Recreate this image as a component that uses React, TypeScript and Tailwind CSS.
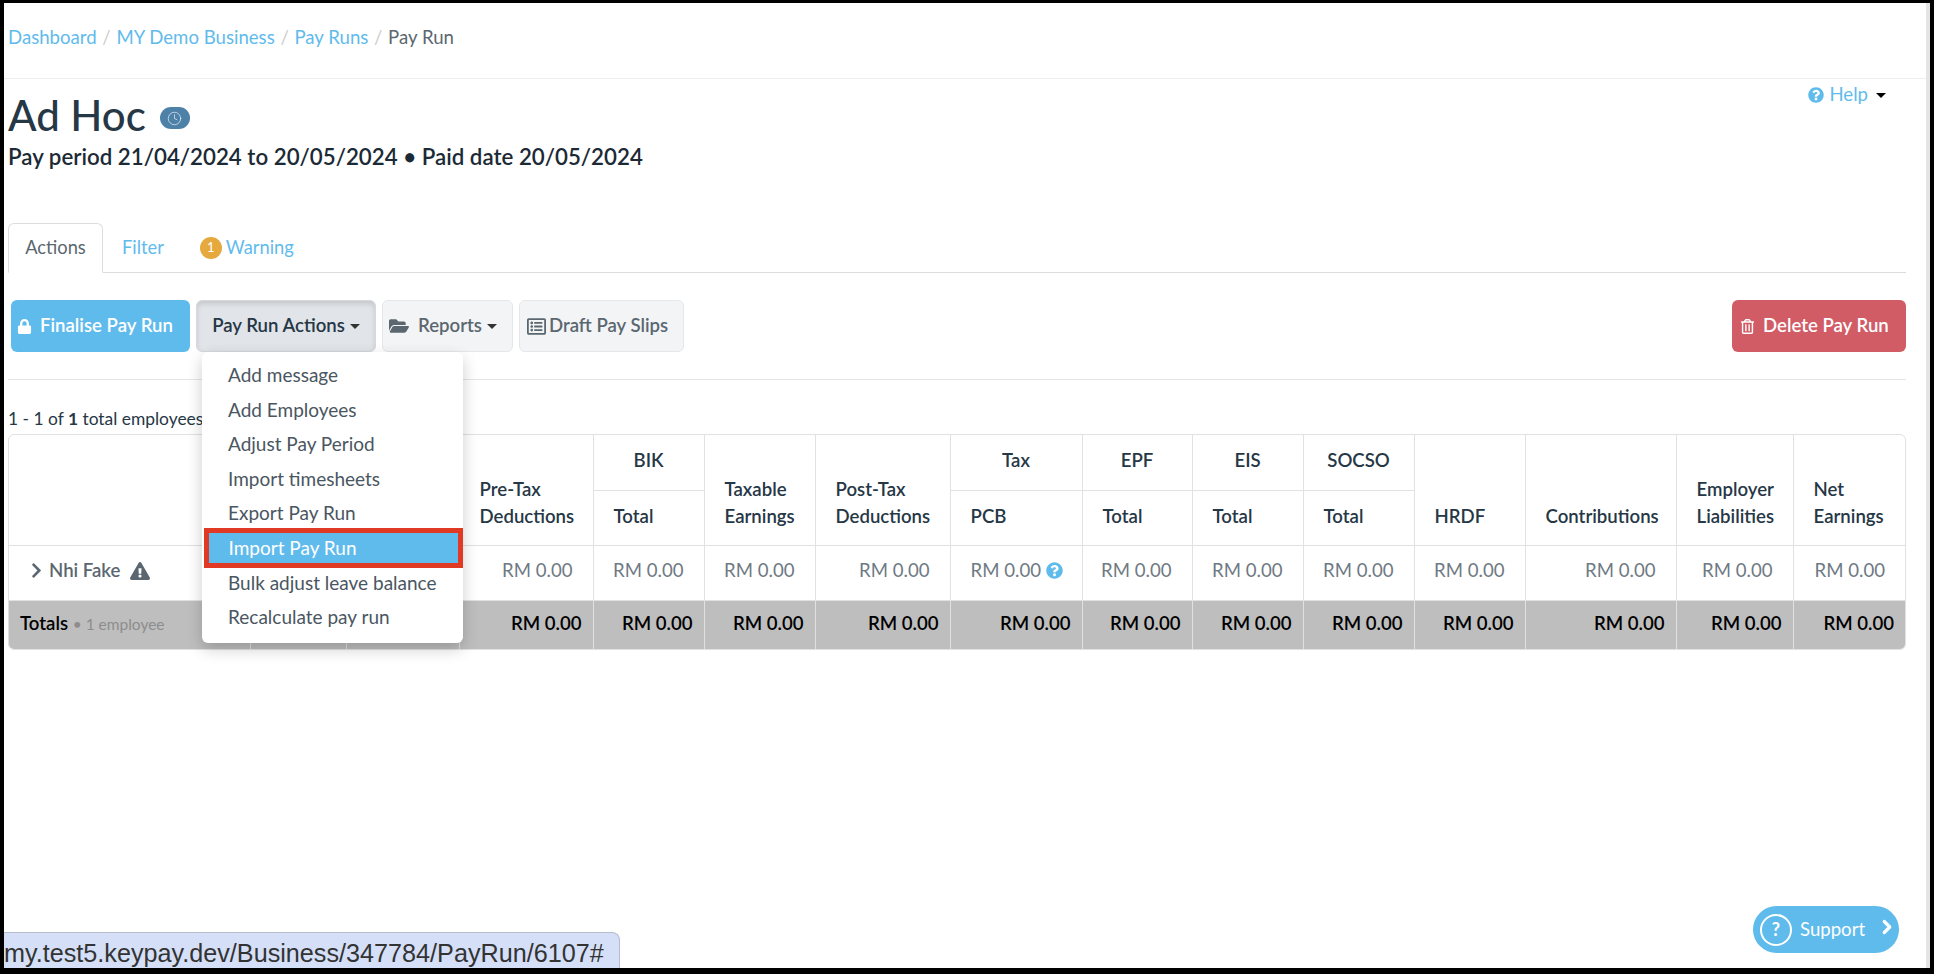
import React from 'react';
import { Clock, ChevronRight } from 'lucide-react';
import { FaLock, FaFolderOpen, FaRegListAlt, FaRegTrashAlt, FaQuestionCircle, FaExclamationTriangle, FaChevronRight } from 'react-icons/fa';

const menuItems = [
  'Add message',
  'Add Employees',
  'Adjust Pay Period',
  'Import timesheets',
  'Export Pay Run',
  'Import Pay Run',
  'Bulk adjust leave balance',
  'Recalculate pay run',
];

const colWidths = [241, 96, 113, 134, 111, 111, 135, 132, 110, 111, 111, 111, 151, 117, 112];

const Caret = ({ className = 'border-t-[#333]' }: { className?: string }) => (
  <span className={`inline-block w-0 h-0 border-x-[5px] border-x-transparent border-t-[5px] ${className}`} />
);

const Crumb = ({ label }: { label: string }) => (
  <>
    <a className="text-[#5fbbec]">{label}</a>
    <span className="text-[#ccc] mx-[5.7px]">/</span>
  </>
);

const thBase = 'border-l border-[#e1e1e1] font-semibold text-[#263746] text-left pl-5 align-bottom pb-[15px] leading-[27px]';
const thGroup = 'border-l border-[#e1e1e1] border-b font-semibold text-[#263746] text-center h-[55px] align-middle pb-[3px]';

const App: React.FC = () => {
  return (
    <div className="relative w-[1934px] h-[974px] bg-black overflow-hidden font-['Lato','Liberation_Sans',sans-serif] text-[18.6px] text-[#333]">
      <div className="absolute left-[4px] top-[3px] w-[1926px] h-[965px] bg-white border-r-4 border-[#e4e4e4] flex flex-col">
        {/* Breadcrumb */}
        <div className="h-[76px] shrink-0 border-b border-[#eee] flex items-center pl-1 pb-[6px]">
          <Crumb label="Dashboard" />
          <Crumb label="MY Demo Business" />
          <Crumb label="Pay Runs" />
          <span className="text-[#5b6770]">Pay Run</span>
        </div>

        <div className="pl-1 w-[1902px]">
          {/* Title */}
          <div className="h-[144px] flex justify-between">
            <div>
              <div className="flex items-center mt-[12px] h-[48px]">
                <h1 className="text-[42px] leading-[48px] font-medium text-[#263746]">Ad Hoc</h1>
                <span className="ml-[14px] mt-[6px] w-[30px] h-[22px] rounded-[11px] bg-[#4d81a8] flex items-center justify-center">
                  <Clock size={15} strokeWidth={1} className="text-white" />
                </span>
              </div>
              <p className="mt-[3px] text-[22.3px] leading-[30px] font-semibold text-[#1c2a36]">
                Pay period 21/04/2024 to 20/05/2024 • Paid date 20/05/2024
              </p>
            </div>
            <div className="flex items-center h-[18px] mt-[7px] mr-[20px] text-[#5fbbec]">
              <FaQuestionCircle size={16} />
              <span className="ml-[5px]">Help</span>
              <Caret className="ml-[8px] border-t-black" />
            </div>
          </div>

          {/* Tabs */}
          <div className="h-[50px] border-b border-[#ddd] flex items-end text-[18.3px]">
            <div className="w-[95px] h-[50px] -mb-px border border-[#ddd] border-b-white bg-white rounded-t-md flex items-center justify-center text-[#5b6770]">
              Actions
            </div>
            <div className="h-[49px] flex items-center ml-[19px] text-[#5fbbec]">Filter</div>
            <div className="h-[49px] flex items-center ml-[36px] text-[#5fbbec]">
              <span className="w-[22px] h-[22px] rounded-full bg-[#e5a93d] text-white text-[13px] flex items-center justify-center">1</span>
              <span className="ml-[4px]">Warning</span>
            </div>
          </div>

          {/* Action buttons */}
          <div className="mt-[27px] h-[52px] flex justify-between pl-[3px]">
            <div className="flex gap-[6px]">
              <button className="w-[179px] rounded-md bg-[#5fbbec] text-white font-semibold flex items-center pl-[6px]">
                <FaLock size={15} />
                <span className="ml-[8px]">Finalise Pay Run</span>
              </button>
              <button className="w-[180px] rounded-md bg-[#e1e4e8] border border-[#d5d8dc] shadow-[inset_0_3px_5px_rgba(0,0,0,0.125)] text-[#263746] font-semibold flex items-center justify-center gap-[5px]">
                Pay Run Actions <Caret />
              </button>
              <button className="w-[131px] rounded-md bg-[#f3f4f6] border border-[#e4e6e9] text-[#5b6770] font-semibold flex items-center pl-[6px]">
                <FaFolderOpen size={20} />
                <span className="ml-[9px]">Reports</span>
                <Caret className="ml-[5px] border-t-[#333]" />
              </button>
              <button className="w-[165px] rounded-md bg-[#f3f4f6] border border-[#e4e6e9] text-[#5b6770] font-semibold flex items-center pl-[7px]">
                <FaRegListAlt size={19} />
                <span className="ml-[3px]">Draft Pay Slips</span>
              </button>
            </div>
            <button className="w-[174px] rounded-md bg-[#d15c66] text-white font-semibold flex items-center pl-[8px]">
              <FaRegTrashAlt size={15} />
              <span className="ml-[8px]">Delete Pay Run</span>
            </button>
          </div>

          <div className="mt-[27px] border-t border-[#e5e5e5]" />

          <p className="h-[54px] flex items-end pb-[2px] text-[17.4px] text-[#263746]">
            <span>1 - 1 of <b>1</b> total employees</span>
          </p>

          {/* Table */}
          <div className="w-[1898px] border border-[#e1e1e1] rounded-md overflow-hidden">
            <table className="table-fixed w-[1896px] border-collapse">
              <colgroup>
                {colWidths.map((w, i) => (
                  <col key={i} style={{ width: w }} />
                ))}
              </colgroup>
              <thead>
                <tr className="h-[55px]">
                  <th rowSpan={2} colSpan={3} className="h-[110px]" />
                  <th rowSpan={2} className={thBase}>Pre-Tax Deductions</th>
                  <th className={thGroup}>BIK</th>
                  <th rowSpan={2} className={thBase}>Taxable Earnings</th>
                  <th rowSpan={2} className={thBase}>Post-Tax Deductions</th>
                  <th className={thGroup}>Tax</th>
                  <th className={thGroup}>EPF</th>
                  <th className={thGroup}>EIS</th>
                  <th className={thGroup}>SOCSO</th>
                  <th rowSpan={2} className={thBase}>HRDF</th>
                  <th rowSpan={2} className={thBase}>Contributions</th>
                  <th rowSpan={2} className={thBase}>Employer Liabilities</th>
                  <th rowSpan={2} className={thBase}>Net Earnings</th>
                </tr>
                <tr className="h-[55px]">
                  <th className={thBase}>Total</th>
                  <th className={thBase}>PCB</th>
                  <th className={thBase}>Total</th>
                  <th className={thBase}>Total</th>
                  <th className={thBase}>Total</th>
                </tr>
              </thead>
              <tbody>
                <tr className="h-[55px] border-t border-[#e1e1e1] text-[#6f7a83]">
                  <td colSpan={3} className="pb-[3px]">
                    <div className="flex items-center pl-[19px] text-[#5b6770] font-semibold">
                      <FaChevronRight size={17} />
                      <span className="ml-[4px]">Nhi Fake</span>
                      <FaExclamationTriangle size={20} className="ml-[10px]" />
                    </div>
                  </td>
                  {Array.from({ length: 12 }).map((_, i) =>
                    i === 4 ? (
                      <td key={i} className="border-l border-[#e1e1e1] pl-5 pb-[3px]">
                        <div className="flex items-center whitespace-nowrap">
                          RM 0.00
                          <FaQuestionCircle size={17} className="ml-[5px] text-[#5fbbec]" />
                        </div>
                      </td>
                    ) : (
                      <td key={i} className="border-l border-[#e1e1e1] text-right pr-5 pb-[3px]">RM 0.00</td>
                    )
                  )}
                </tr>
                <tr className="h-[49px] bg-[#bebebe] text-black font-semibold">
                  <td className="border-t border-[#e1e1e1] pl-[11px] pb-[1px] whitespace-nowrap">
                    Totals <span className="text-[15.5px] font-normal text-[#8d8d8d]">• 1 employee</span>
                  </td>
                  <td className="border-l border-t border-[#e1e1e1]" />
                  <td className="border-l border-t border-[#e1e1e1]" />
                  {Array.from({ length: 12 }).map((_, i) => (
                    <td key={i} className="border-l border-t border-[#e1e1e1] text-right pr-[11px] pb-[1px]">RM 0.00</td>
                  ))}
                </tr>
              </tbody>
            </table>
          </div>
        </div>
      </div>

      {/* Dropdown menu */}
      <div className="absolute left-[202px] top-[352px] w-[261px] h-[291px] bg-white rounded-md shadow-[0_6px_16px_rgba(0,0,0,0.2)] pt-[6px] text-[19px]">
        {menuItems.map((item) =>
          item === 'Import Pay Run' ? (
            <div key={item} className="h-[40px] -my-[2.6px] ml-[1.5px] border-[5px] border-[#e03a24] bg-[#5fbbec] text-white flex items-center pl-[20px] relative">
              {item}
            </div>
          ) : (
            <div key={item} className="h-[34.6px] flex items-center pl-[26px] text-[#4a5661]">
              {item}
            </div>
          )
        )}
      </div>

      {/* Browser status bar */}
      <div className="absolute left-[4px] top-[932px] w-[616px] h-[36px] pt-[6px] bg-[#d5e0f8] border-t border-r border-[#b5bdcc] rounded-tr-lg overflow-hidden flex items-center font-['Liberation_Sans',sans-serif] text-[25.2px] text-[#333] whitespace-nowrap">
        my.test5.keypay.dev/Business/347784/PayRun/6107#
      </div>

      {/* Support button */}
      <div className="absolute left-[1753px] top-[906px] w-[146px] h-[47px] rounded-full bg-[#5fbbec] text-white flex items-center pl-[7px]">
        <span className="w-[32px] h-[32px] rounded-full border-[2.5px] border-white flex items-center justify-center font-bold text-[18px]">?</span>
        <span className="ml-[8px] text-[18.6px]">Support</span>
        <ChevronRight size={22} strokeWidth={3.5} className="ml-[11px] -mt-[6px]" />
      </div>
    </div>
  );
};

export default App;
